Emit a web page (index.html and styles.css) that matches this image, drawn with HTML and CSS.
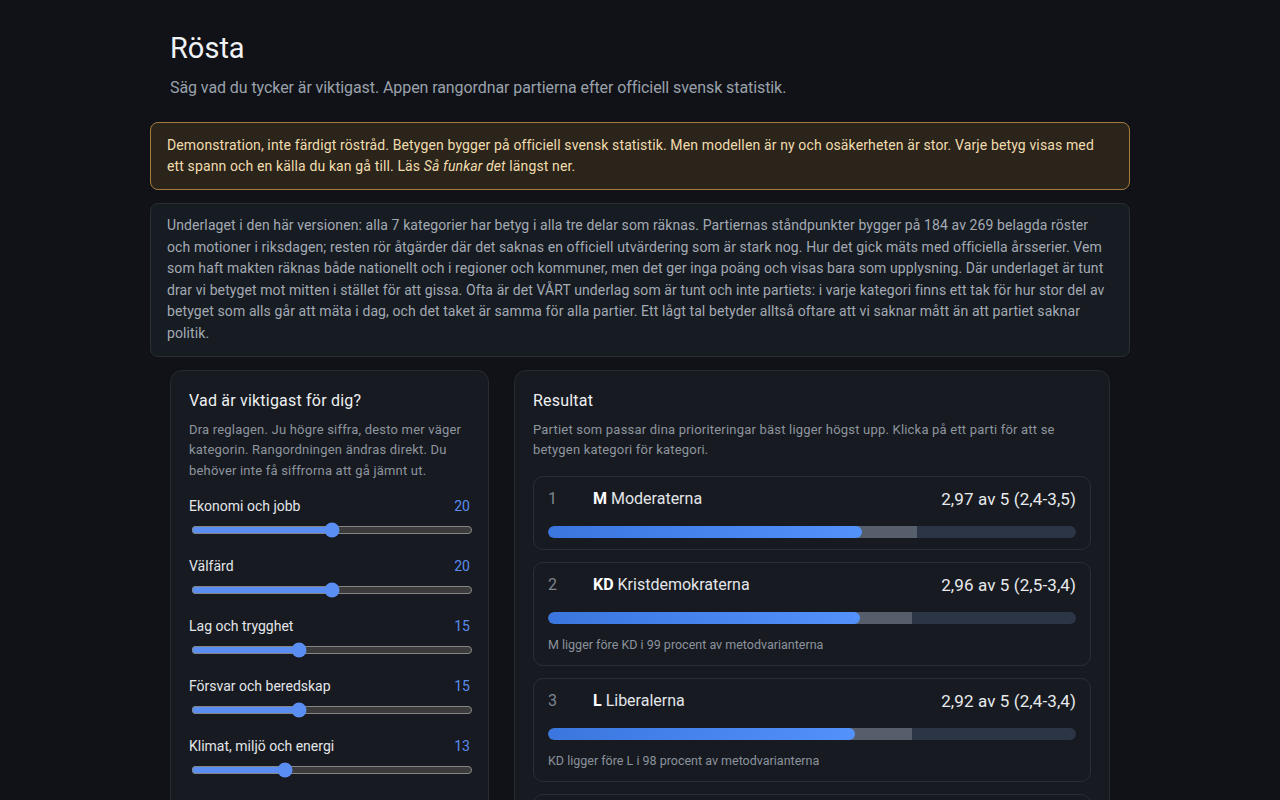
FILE: index.html
```html
<!DOCTYPE html>
<html lang="sv">
<head>
<meta charset="UTF-8">
<meta name="viewport" content="width=device-width, initial-scale=1.0">
<title>Rösta</title>
<link rel="stylesheet" href="styles.css">
</head>
<body>
<div class="page">
    <header class="page-header">
        <h1>Rösta</h1>
        <p class="lead">Säg vad du tycker är viktigast. Appen rangordnar partierna efter officiell svensk statistik.</p>
    </header>

    <div class="notice notice-warn">
        Demonstration, inte färdigt röstråd. Betygen bygger på officiell svensk statistik. Men modellen är ny och osäkerheten är stor. Varje betyg visas med ett spann och en källa du kan gå till. Läs <em>Så funkar det</em> längst ner.
    </div>

    <div class="notice notice-info">
        Underlaget i den här versionen: alla 7 kategorier har betyg i alla tre delar som räknas. Partiernas ståndpunkter bygger på 184 av 269 belagda röster och motioner i riksdagen; resten rör åtgärder där det saknas en officiell utvärdering som är stark nog. Hur det gick mäts med officiella årsserier. Vem som haft makten räknas både nationellt och i regioner och kommuner, men det ger inga poäng och visas bara som upplysning. Där underlaget är tunt drar vi betyget mot mitten i stället för att gissa. Ofta är det VÅRT underlag som är tunt och inte partiets: i varje kategori finns ett tak för hur stor del av betyget som alls går att mäta i dag, och det taket är samma för alla partier. Ett lågt tal betyder alltså oftare att vi saknar mått än att partiet saknar politik.
    </div>

    <main class="columns">
        <section class="panel">
            <h2>Vad är viktigast för dig?</h2>
            <p class="hint">Dra reglagen. Ju högre siffra, desto mer väger kategorin. Rangordningen ändras direkt. Du behöver inte få siffrorna att gå jämnt ut.</p>

            <div class="weights">
                <label class="weight">
                    <span class="weight-row"><span>Ekonomi och jobb</span><span class="weight-val">20</span></span>
                    <input type="range" min="0" max="40" value="20">
                </label>
                <label class="weight">
                    <span class="weight-row"><span>Välfärd</span><span class="weight-val">20</span></span>
                    <input type="range" min="0" max="40" value="20">
                </label>
                <label class="weight">
                    <span class="weight-row"><span>Lag och trygghet</span><span class="weight-val">15</span></span>
                    <input type="range" min="0" max="40" value="15">
                </label>
                <label class="weight">
                    <span class="weight-row"><span>Försvar och beredskap</span><span class="weight-val">15</span></span>
                    <input type="range" min="0" max="40" value="15">
                </label>
                <label class="weight">
                    <span class="weight-row"><span>Klimat, miljö och energi</span><span class="weight-val">13</span></span>
                    <input type="range" min="0" max="40" value="13">
                </label>
                <label class="weight">
                    <span class="weight-row"><span>Skola och utbildning</span><span class="weight-val">10</span></span>
                    <input type="range" min="0" max="40" value="10">
                </label>
                <label class="weight">
                    <span class="weight-row"><span>Migration och integration</span><span class="weight-val">7</span></span>
                    <input type="range" min="0" max="40" value="7">
                </label>
            </div>
        </section>

        <section class="panel">
            <h2>Resultat</h2>
            <p class="hint">Partiet som passar dina prioriteringar bäst ligger högst upp. Klicka på ett parti för att se betygen kategori för kategori.</p>

            <div class="results">
                <div class="party">
                    <div class="party-row">
                        <span class="rank">1</span>
                        <span class="name"><b>M</b> Moderaterna</span>
                        <span class="score">2,97 av 5 (2,4-3,5)</span>
                    </div>
                    <div class="bar"><span class="bar-fill" style="width:59.4%"></span><span class="bar-range" style="width:10.4%"></span></div>
                </div>
                <div class="party">
                    <div class="party-row">
                        <span class="rank">2</span>
                        <span class="name"><b>KD</b> Kristdemokraterna</span>
                        <span class="score">2,96 av 5 (2,5-3,4)</span>
                    </div>
                    <div class="bar"><span class="bar-fill" style="width:59.1%"></span><span class="bar-range" style="width:9.8%"></span></div>
                    <p class="party-note">M ligger före KD i 99 procent av metodvarianterna</p>
                </div>
                <div class="party">
                    <div class="party-row">
                        <span class="rank">3</span>
                        <span class="name"><b>L</b> Liberalerna</span>
                        <span class="score">2,92 av 5 (2,4-3,4)</span>
                    </div>
                    <div class="bar"><span class="bar-fill" style="width:58.1%"></span><span class="bar-range" style="width:10.8%"></span></div>
                    <p class="party-note">KD ligger före L i 98 procent av metodvarianterna</p>
                </div>
                <div class="party">
                    <div class="party-row">
                        <span class="rank">4</span>
                        <span class="name"><b>C</b> Centerpartiet</span>
                        <span class="score">2,81 av 5 (2,3-3,3)</span>
                    </div>
                    <div class="bar"><span class="bar-fill" style="width:56.2%"></span><span class="bar-range" style="width:9.8%"></span></div>
                    <p class="party-note">L ligger före C i 91 procent av metodvarianterna</p>
                </div>
                <div class="party">
                    <div class="party-row">
                        <span class="rank">5</span>
                        <span class="name"><b>S</b> Socialdemokraterna</span>
                        <span class="score">2,74 av 5 (2,2-3,2)</span>
                    </div>
                    <div class="bar"><span class="bar-fill" style="width:54.8%"></span><span class="bar-range" style="width:9.2%"></span></div>
                    <p class="party-note">C ligger före S i 84 procent av metodvarianterna</p>
                </div>
            </div>
        </section>
    </main>
</div>
</body>
</html>
```

FILE: styles.css
```css
body {
    margin: 0;
    background-color: #101217;
    color: #dfe2e6;
    font-family: Roboto, "Liberation Sans", Arial, sans-serif;
    color-scheme: dark;
}

.page {
    max-width: 980px;
    margin: 0 auto;
    padding: 31px 0 40px;
}

.page-header {
    padding: 0 20px;
    margin-bottom: 22px;
}

h1 {
    margin: 0;
    font-size: 29px;
    font-weight: 400;
    line-height: 34px;
    color: #f0f2f5;
}

.lead {
    margin: 11px 0 0;
    font-size: 16px;
    line-height: 24px;
    letter-spacing: -0.08px;
    color: #9aa1ab;
}

.notice {
    margin-bottom: 13px;
    padding: 12px 16px;
    border: 1px solid #2a2f38;
    border-radius: 8px;
    background-color: #171b22;
    color: #a3aab4;
    font-size: 14px;
    line-height: 21px;
}

.notice-warn {
    border-color: #a57c3e;
    background-color: #2a241b;
    color: #f1dcae;
    letter-spacing: 0.13px;
}

.notice-info {
    padding: 11px 16px;
    line-height: 21.6px;
    letter-spacing: 0.1px;
}

.columns {
    display: grid;
    grid-template-columns: 319px 1fr;
    gap: 25px;
    padding: 0 20px;
    margin-top: 13px;
    align-items: start;
}

.panel {
    padding: 19px 18px 20px;
    border: 1px solid #262b33;
    border-radius: 12px;
    background-color: #171a20;
}

h2 {
    margin: 0;
    font-size: 16px;
    font-weight: 400;
    line-height: 22px;
    letter-spacing: 0.2px;
    color: #eef0f3;
}

.hint {
    margin: 8px 0 0;
    font-size: 13px;
    line-height: 20.5px;
    letter-spacing: 0.2px;
    color: #8d959f;
}

.weights {
    display: flex;
    flex-direction: column;
    gap: 16px;
    margin-top: 15px;
}

.weight {
    display: flex;
    flex-direction: column;
    gap: 4px;
}

.weight-row {
    display: flex;
    justify-content: space-between;
    font-size: 14px;
    line-height: 20px;
    color: #e3e6ea;
}

.weight-val {
    color: #5b8def;
}

input[type="range"] {
    width: calc(100% + 1px);
    height: 16px;
    margin: 2px 0 2px 2px;
    accent-color: #5b8ef2;
}

.results {
    display: flex;
    flex-direction: column;
    gap: 12px;
    margin-top: 15px;
}

.party {
    padding: 11px 14px;
    border: 1px solid #292e37;
    border-radius: 10px;
    background-color: #171a20;
}

.party-row {
    display: flex;
    align-items: center;
    font-size: 16px;
    line-height: 22px;
}

.rank {
    width: 45px;
    color: #7d858f;
}

.name {
    flex: 1;
    color: #e3e6ea;
}

.name b {
    color: #ffffff;
    font-weight: 700;
}

.score {
    font-size: 17px;
    letter-spacing: 0.1px;
    color: #e8eaed;
}

.bar {
    display: flex;
    height: 12px;
    margin-top: 16px;
    border-radius: 6px;
    background-color: #2c3546;
    overflow: hidden;
}

.bar-fill {
    border-radius: 6px;
    background: linear-gradient(90deg, #3a76de, #5391fb);
    position: relative;
    z-index: 1;
}

.bar-range {
    margin-left: -6px;
    padding-left: 6px;
    background-color: #565e6b;
}

.party-note {
    margin: 12px 0 0;
    font-size: 12.5px;
    line-height: 18px;
    color: #8b939e;
}
```
